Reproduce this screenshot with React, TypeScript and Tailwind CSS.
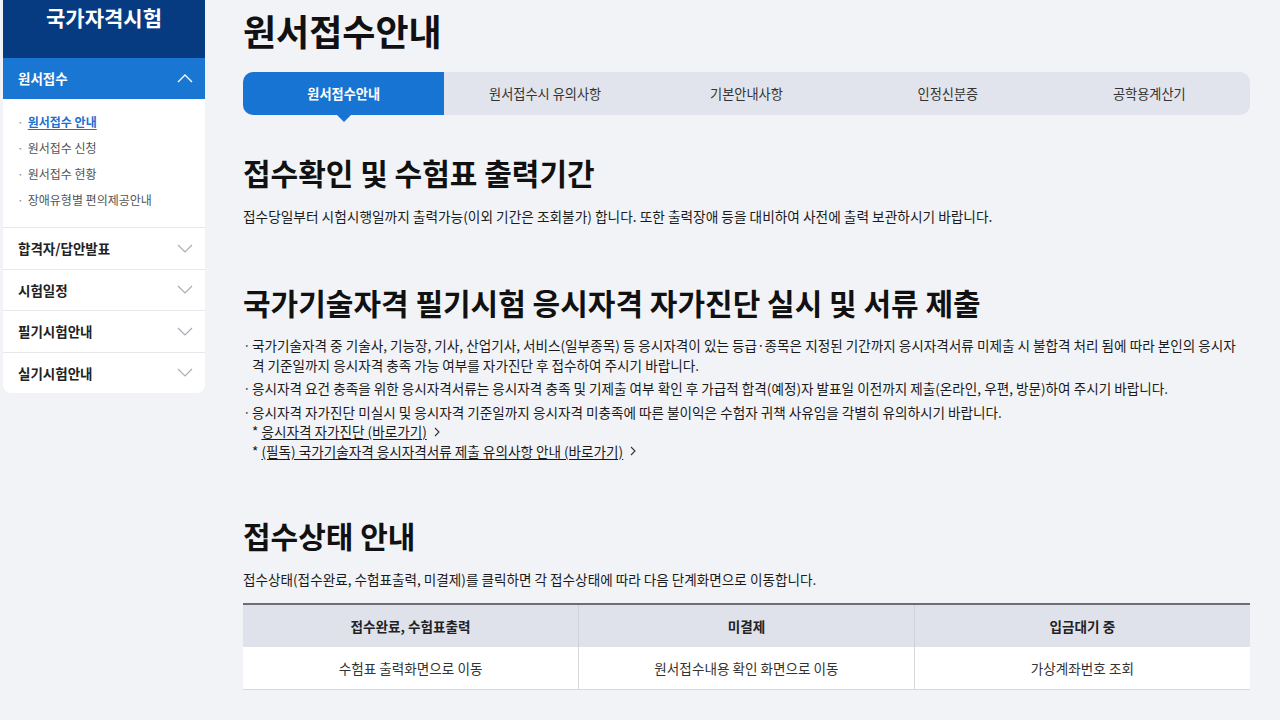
import React from 'react';

const ChevronDown = ({ className = '' }: { className?: string }) => (
  <svg width="16" height="9" viewBox="0 0 16 9" fill="none" className={className}>
    <polyline points="1,1 8,8 15,1" stroke="currentColor" strokeWidth="1.2" />
  </svg>
);

const ChevronUp = ({ className = '' }: { className?: string }) => (
  <svg width="16" height="9" viewBox="0 0 16 9" fill="none" className={className}>
    <polyline points="1,8 8,1 15,8" stroke="currentColor" strokeWidth="1.4" />
  </svg>
);

const LinkArrow = () => (
  <svg width="10" height="10" viewBox="0 0 10 10" fill="none" className="ml-[5px]">
    <polyline points="3,1 7,5 3,9" stroke="#333" strokeWidth="1.1" />
  </svg>
);

const subMenu = ['원서접수 안내', '원서접수 신청', '원서접수 현황', '장애유형별 편의제공안내'];
const menus = ['합격자/답안발표', '시험일정', '필기시험안내', '실기시험안내'];
const tabs = ['원서접수안내', '원서접수시 유의사항', '기본안내사항', '인정신분증', '공학용계산기'];

const Sidebar = () => (
  <aside className="ml-[3px] w-[202px] shrink-0">
    {/* 상단 타이틀 */}
    <div className="flex h-[58px] justify-center bg-[#063b82] pt-[3px]">
      <span className="text-[21px] font-bold leading-[28px] text-white">국가자격시험</span>
    </div>

    <div className="overflow-hidden rounded-b-[8px] bg-white">
      {/* 열린 메뉴 */}
      <div className="flex h-[41px] items-center justify-between bg-[#1976d2] pl-[15px] pr-[12px]">
        <span className="text-[13.5px] font-bold text-white">원서접수</span>
        <ChevronUp className="text-white" />
      </div>
      <ul className="flex flex-col pb-[14px] pt-[10px]">
        {subMenu.map((item, i) => (
          <li key={item} className="flex h-[26px] items-center pl-[14px] text-[12px]">
            <span className="mr-[4px] text-[#888]">·</span>
            {i === 0 ? (
              <span className="font-bold text-[#1a6fd0] underline underline-offset-2">{item}</span>
            ) : (
              <span className="text-[#555]">{item}</span>
            )}
          </li>
        ))}
      </ul>

      {/* 닫힌 메뉴 */}
      {menus.map((m) => (
        <div
          key={m}
          className="flex h-[41.5px] items-center justify-between border-t border-[#e6e8ec] pl-[15px] pr-[12px]"
        >
          <span className="text-[13.5px] font-bold text-[#222]">{m}</span>
          <ChevronDown className="text-[#a9adb5]" />
        </div>
      ))}
    </div>
  </aside>
);

const Tabs = () => (
  <div className="mt-[22px] grid h-[43px] grid-cols-5 rounded-[10px] bg-[#e1e4ec]">
    {tabs.map((t, i) => (
      <div
        key={t}
        className={
          i === 0
            ? 'relative flex items-center justify-center rounded-l-[10px] bg-[#1874d2] text-[13.2px] font-bold text-white'
            : 'flex items-center justify-center text-[13.2px] text-[#333]'
        }
      >
        {t}
        {i === 0 && (
          <span className="absolute left-1/2 top-full h-0 w-0 -translate-x-1/2 border-x-[7px] border-t-[7px] border-x-transparent border-t-[#1874d2]" />
        )}
      </div>
    ))}
  </div>
);

export default function App() {
  return (
    <div className="flex min-h-[720px] w-full bg-[#f1f3f7] font-['Noto_Sans_CJK_KR','Noto_Sans',sans-serif] text-[#1a1a1a]">
      <Sidebar />

      <main className="ml-[38px] w-[1007px] pt-[10px]">
        <h1 className="h-[40px] text-[36px] font-bold leading-[40px] text-[#111]">원서접수안내</h1>

        <Tabs />

        {/* 접수확인 및 수험표 출력기간 */}
        <h2 className="mt-[39px] text-[30px] font-bold leading-[36px] text-[#111]">접수확인 및 수험표 출력기간</h2>
        <p className="mt-[16px] text-[13.7px] leading-[20px]">
          접수당일부터 시험시행일까지 출력가능(이외 기간은 조회불가) 합니다. 또한 출력장애 등을 대비하여 사전에 출력 보관하시기 바랍니다.
        </p>

        {/* 자가진단 */}
        <h2 className="mt-[58px] text-[30px] font-bold leading-[36px] text-[#111]">
          국가기술자격 필기시험 응시자격 자가진단 실시 및 서류 제출
        </h2>
        <ul className="mt-[16px] flex flex-col gap-[4px] text-[13.6px] leading-[19.5px]">
          <li className="flex">
            <span className="w-[9px] shrink-0 text-[#555]">·</span>
            <span className="break-all pr-[6px]">
              국가기술자격 중 기술사, 기능장, 기사, 산업기사, 서비스(일부종목) 등 응시자격이 있는 등급·종목은 지정된 기간까지 응시자격서류 미제출 시 불합격 처리 됨에 따라 본인의 응시자격 기준일까지 응시자격 충족 가능 여부를 자가진단 후 접수하여 주시기 바랍니다.
            </span>
          </li>
          <li className="flex">
            <span className="w-[9px] shrink-0 text-[#555]">·</span>
            <span>
              응시자격 요건 충족을 위한 응시자격서류는 응시자격 충족 및 기제출 여부 확인 후 가급적 합격(예정)자 발표일 이전까지 제출(온라인, 우편, 방문)하여 주시기 바랍니다.
            </span>
          </li>
          <li className="flex">
            <span className="w-[9px] shrink-0 text-[#555]">·</span>
            <div className="flex flex-col">
              <span>
                응시자격 자가진단 미실시 및 응시자격 기준일까지 응시자격 미충족에 따른 불이익은 수험자 귀책 사유임을 각별히 유의하시기 바랍니다.
              </span>
              <span className="flex items-center">
                *&nbsp;<span className="underline underline-offset-2">응시자격 자가진단 (바로가기)</span>
                <LinkArrow />
              </span>
              <span className="flex items-center">
                *&nbsp;<span className="underline underline-offset-2">(필독) 국가기술자격 응시자격서류 제출 유의사항 안내 (바로가기)</span>
                <LinkArrow />
              </span>
            </div>
          </li>
        </ul>

        {/* 접수상태 안내 */}
        <h2 className="mt-[56px] text-[30px] font-bold leading-[36px] text-[#111]">접수상태 안내</h2>
        <p className="mt-[16px] text-[13.6px] leading-[20px]">
          접수상태(접수완료, 수험표출력, 미결제)를 클릭하면 각 접수상태에 따라 다음 단계화면으로 이동합니다.
        </p>

        <table className="mt-[14px] w-full table-fixed border-t-2 border-[#6b6e74] text-[13.6px]">
          <thead>
            <tr className="h-[43px] bg-[#dfe2ea]">
              <th className="font-bold text-[#222]">접수완료, 수험표출력</th>
              <th className="border-l border-[#cfd2d8] font-bold text-[#222]">미결제</th>
              <th className="border-l border-[#cfd2d8] font-bold text-[#222]">입금대기 중</th>
            </tr>
          </thead>
          <tbody>
            <tr className="h-[42px] border-b border-[#d6d8dc] bg-white text-center text-[#333]">
              <td>수험표 출력화면으로 이동</td>
              <td className="border-l border-[#d6d8dc]">원서접수내용 확인 화면으로 이동</td>
              <td className="border-l border-[#d6d8dc]">가상계좌번호 조회</td>
            </tr>
          </tbody>
        </table>
      </main>
    </div>
  );
}
